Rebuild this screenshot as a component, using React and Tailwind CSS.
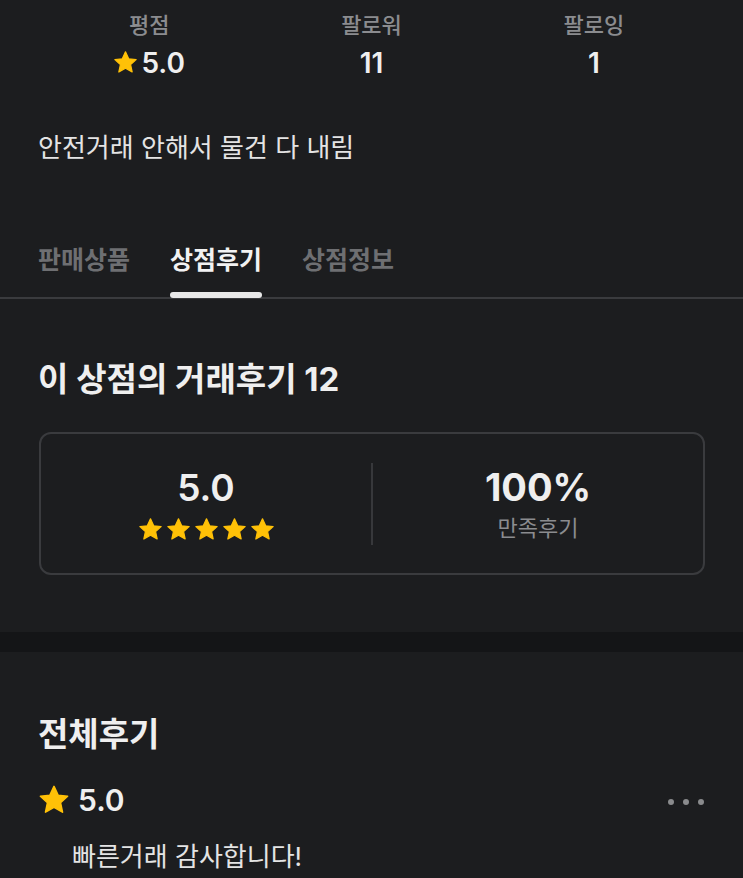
const Star = ({ size = 24, className = '' }) => (
  <svg width={size} height={size} viewBox="0 0 24 24" className={className}>
    <path
      d="M12 1.8l3.05 6.6 7.15.8-5.33 4.85 1.5 7.05L12 17.5l-6.37 3.6 1.5-7.05L1.8 9.2l7.15-.8z"
      fill="#ffc107"
      stroke="#ffc107"
      strokeWidth="1.2"
      strokeLinejoin="round"
    />
  </svg>
)

const stats = [
  { label: '평점', value: '5.0', star: true },
  { label: '팔로워', value: '11' },
  { label: '팔로잉', value: '1' },
]

const tabs = ['판매상품', '상점후기', '상점정보']

export default function App() {
  return (
    <div
      className="min-h-screen bg-[#1c1d1f] text-[#ececec] overflow-hidden"
      style={{ fontFamily: "Inter, 'Noto Sans CJK KR', sans-serif" }}
    >
      {/* stats */}
      <div className="grid grid-cols-3 px-[38px] pt-[9px]">
        {stats.map((s) => (
          <div key={s.label} className="flex flex-col items-center">
            <span className="text-[22px] leading-[32px] font-medium text-[#8b8c8f]">{s.label}</span>
            <span className="flex items-center mt-[6px] text-[28px] leading-[32px] font-semibold text-[#efefef]">
              {s.star && <Star size={25} className="mr-[3px] mb-[1px]" />}
              {s.value}
            </span>
          </div>
        ))}
      </div>

      {/* bio */}
      <p className="px-[38px] mt-[52px] text-[26px] leading-[34px] text-[#e4e4e4]">안전거래 안해서 물건 다 내림</p>

      {/* tabs */}
      <div className="mt-[78px] border-b-2 border-[#3a3b3e]">
        <div className="flex gap-[40px] px-[38px]">
          {tabs.map((t, i) => (
            <div key={t} className="relative pb-[20px]">
              <span
                className={
                  'text-[25px] leading-[34px] font-bold ' + (i === 1 ? 'text-[#f2f2f2]' : 'text-[#6e6f72]')
                }
              >
                {t}
              </span>
              {i === 1 && (
                <div className="absolute left-0 right-0 bottom-[-1px] h-[6px] rounded-full bg-[#e8e8e8]" />
              )}
            </div>
          ))}
        </div>
      </div>

      {/* review summary */}
      <section className="px-[38px] pt-[60px] pb-[57px]">
        <h2 className="text-[33px] leading-[40px] font-bold text-[#efefef]">이 상점의 거래후기 12</h2>
        <div className="mt-[33px] ml-[1px] h-[143px] border-2 border-[#3a3b3e] rounded-[12px] flex items-center">
          <div className="flex-1 flex flex-col items-center">
            <span className="text-[37px] leading-[44px] font-semibold text-[#efefef]">5.0</span>
            <div className="flex gap-[3px] mt-[7px]">
              {[0, 1, 2, 3, 4].map((i) => (
                <Star key={i} size={25} />
              ))}
            </div>
          </div>
          <div className="w-[2px] h-[82px] bg-[#37383b]" />
          <div className="flex-1 flex flex-col items-center">
            <span className="text-[38px] leading-[44px] font-bold text-[#efefef]">100%</span>
            <span className="text-[22px] leading-[30px] text-[#8b8c8f] mt-[4px]">만족후기</span>
          </div>
        </div>
      </section>

      <div className="h-[20px] bg-[#141517]" />

      {/* all reviews */}
      <section className="px-[38px] pt-[61px]">
        <h2 className="text-[33px] leading-[42px] font-bold text-[#efefef]">전체후기</h2>
        <div className="mt-[27px] flex items-center justify-between">
          <div className="flex items-center">
            <Star size={32} className="mr-[8px]" />
            <span className="text-[30px] leading-[36px] font-semibold text-[#efefef]">5.0</span>
          </div>
          <div className="flex gap-[9px] mr-[1px] mt-[4px]">
            <span className="w-[6px] h-[6px] rounded-full bg-[#8a8b8d]" />
            <span className="w-[6px] h-[6px] rounded-full bg-[#8a8b8d]" />
            <span className="w-[6px] h-[6px] rounded-full bg-[#8a8b8d]" />
          </div>
        </div>
        <p className="mt-[22px] pl-[34px] text-[26px] leading-[34px] text-[#e4e4e4]">빠른거래 감사합니다!</p>
      </section>
    </div>
  )
}
